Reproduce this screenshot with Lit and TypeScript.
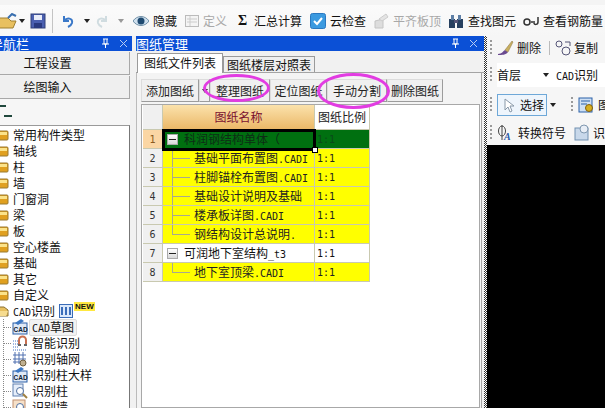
import { LitElement, html, css, svg } from "lit";
import { customElement } from "lit/decorators.js";

const ic = (w: number, h: number, body: unknown, cls = "") =>
  html`<svg class="ic ${cls}" width=${w} height=${h} viewBox="0 0 ${w} ${h}">${body}</svg>`;

/* Latin runs use a 10px mono so they advance 6px, like the half-width bitmap face of the reference. */
const t = (s: string) =>
  s.split(/([\x00-\x7f]+)/).map((p, i) => (i % 2 ? html`<span class="m">${p}</span>` : p));

const folderClosed = ic(9, 11, svg`<rect x="-6" y="1" width="14" height="9" rx="1" fill="#e0a020" stroke="#9a7a30"/><rect x="-5" y="2" width="12" height="3" fill="#fbe38a"/>`);
const folderOpen = ic(9, 11, svg`<path d="M-4 1H4L8 4V10H-4Z" fill="#e8c060" stroke="#8a7030"/><path d="M-4 5H8L6 10H-4Z" fill="#f6dc90"/>`);
const cadIcon = ic(16, 16, svg`<rect x="1" y="4" width="14" height="11" fill="#dfe9f6" stroke="#2a5fa8"/><path d="M3 4L9 0L12 2L6 6Z" fill="#3c78c4"/><text x="1.5" y="13" font-size="6.5" font-weight="700" fill="#123" font-family="Liberation Sans">CAD</text>`);
const magnet = ic(16, 16, svg`<path d="M1 6H6M1 9H6M1 12H6M1 15H14" stroke="#4070c0" stroke-dasharray="1 1"/><path d="M7 10V5a3.5 3.5 0 0 1 7 0v5" fill="none" stroke="#c87050" stroke-width="2"/><path d="M6 10h3M12 10h3" stroke="#666" stroke-width="2"/>`);
const axis = ic(16, 16, svg`<path d="M3 1V13M7 1V13M11 1V13M1 4H14M1 8H14M1 11H14" stroke="#5070b0"/><circle cx="11" cy="12" r="3" fill="#c0b090" stroke="#706040"/>`);
const colSearch = ic(16, 16, svg`<rect x="1" y="1" width="10" height="12" fill="#e6eefa" stroke="#6080b0"/><circle cx="8" cy="8" r="3.5" fill="#fff" stroke="#5070a0"/><path d="M11 11L15 15" stroke="#a08040" stroke-width="2"/>`);
const wallSearch = ic(16, 16, svg`<rect x="1" y="1" width="12" height="13" fill="#f6e0c8" stroke="#c09070"/><circle cx="8" cy="8" r="3.5" fill="#fff" stroke="#5070a0"/>`);
const pin = ic(9, 11, svg`<path d="M2 1H7M3 1V6H6V1M1 6H8M4.500 6V10" stroke="#fff" fill="none"/>`, "pin");
const closeX = ic(9, 9, svg`<path d="M1 1L8 8M8 1L1 8" stroke="#b8ccf4"/>`, "x");

const tree = ["常用构件类型", "轴线", "柱", "墙", "门窗洞", "梁", "板", "空心楼盖", "基础", "其它", "自定义"];
const kids = [
  { t: "CAD草图", i: cadIcon, sel: true },
  { t: "智能识别", i: magnet },
  { t: "识别轴网", i: axis },
  { t: "识别柱大样", i: cadIcon },
  { t: "识别柱", i: colSearch },
  { t: "识别墙", i: wallSearch },
];

type Row = { n: number; name: string; kind: "sel" | "child" | "parent"; last?: boolean };
const rows: Row[] = [
  { n: 1, name: "科润钢结构单体（", kind: "sel" },
  { n: 2, name: "基础平面布置图.CADI", kind: "child" },
  { n: 3, name: "柱脚锚栓布置图.CADI", kind: "child" },
  { n: 4, name: "基础设计说明及基础", kind: "child" },
  { n: 5, name: "楼承板详图.CADI", kind: "child" },
  { n: 6, name: "钢结构设计总说明.", kind: "child", last: true },
  { n: 7, name: "可润地下室结构_t3", kind: "parent" },
  { n: 8, name: "地下室顶梁.CADI", kind: "child", last: true },
];

@customElement("app-root")
export class AppRoot extends LitElement {
  static styles = css`
    :host { display: block; width: 605px; height: 408px; overflow: hidden; background: #f1f1f1; color: #111;
      font: 12px/1 "Noto Sans CJK SC", "Liberation Sans", sans-serif; }
    .m { font: 10px/1 "DejaVu Sans Mono", monospace; }
    .ic { display: block; flex: none; }
    .toolbar { height: 36px; display: flex; align-items: center; padding-top: 5px; box-sizing: border-box;
      background: linear-gradient(#f4f4f4 5px, #fbfbfb 5px, #f6f6f6); white-space: nowrap; overflow: hidden; }
    .tool { display: flex; align-items: center; gap: 4px; flex: none; }
    .tool.off { color: #a8a8a8; }
    .tight { gap: 2px; }
    .sig { font: 700 14px "Liberation Serif", serif; width: 9px; margin-right: 3px; }
    .arrow { width: 0; height: 0; border: 3px solid transparent; border-top: 4px solid #222; border-bottom: 0; flex: none; }
    .arrow.off { border-top-color: #999; }
    .tsep { width: 1px; height: 24px; background: #c4c4c4; flex: none; }
    .ml2 { margin-left: 2px; } .ml3 { margin-left: 3px; } .ml4 { margin-left: 4px; } .ml5 { margin-left: 5px; }
    .ml6 { margin-left: 6px; } .ml7 { margin-left: 7px; } .ml8 { margin-left: 8px; } .ml9 { margin-left: 9px; }
    .ml10 { margin-left: 10px; } .ml11 { margin-left: 11px; } .ml15 { margin-left: 15px; } .ml22 { margin-left: 22px; }
    .main { display: flex; height: 372px; }
    .title { height: 15px; background: #0b50d6; color: #fff; display: flex; align-items: center; font-size: 13px; overflow: hidden; flex: none; }
    .title .name { flex: 1; white-space: nowrap; }
    .title .pin { margin-right: 9px; }
    .title .x { margin-right: 4px; }
    .mid .title .x { margin-right: 6px; }
    .left { width: 132px; flex: none; display: flex; flex-direction: column; }
    .left .title .name { margin-left: -10px; }
    .navbtn { height: 22px; margin: 1px 2px 0 0; border-bottom: 1px solid #a8a8a8; border-right: 1px solid #a8a8a8; background: #efefef;
      display: flex; align-items: center; justify-content: center; padding-right: 34px; flex: none; }
    .navtop { height: 26px; flex: none; margin-right: 2px; background: #f6f6f6; position: relative; }
    .navtop i { position: absolute; background: #20483c; height: 2px; }
    .navtop .a { left: 0; top: 6px; width: 6px; }
    .navtop .b { left: 4px; top: 16px; width: 8px; }
    .treebox { flex: 1; margin-right: 2px; background: #fff; border-top: 1px solid #9a9a9a; border-right: 1px solid #777; padding-top: 1px; overflow: hidden; }
    .trow { height: 16px; display: flex; align-items: center; gap: 4px; white-space: nowrap; }
    .kid { padding-left: 12px; gap: 4px;
      background: repeating-linear-gradient(#888 0 1px, transparent 1px 2px) 3px 0 / 1px 100% no-repeat; }
    .kid::before { content: ""; width: 7px; border-top: 1px dotted #888; margin-left: -8px; margin-right: -3px; }
    .kid .lbl.sel { background: #f2f2f2; border: 1px solid #dcdcdc; border-radius: 2px; padding: 1px 2px; margin-left: -3px; }
    .new { color: #111; background: #ffe840; font: 700 8px "Liberation Sans", sans-serif; padding: 0 1px; align-self: flex-start; margin-left: -3px; margin-top: -1px; }
    .mid { width: 348px; flex: none; margin-left: 4px; display: flex; flex-direction: column; }
    .tabs { height: 21px; display: flex; align-items: flex-end; flex: none; padding-left: 1px; border-bottom: 1px solid #a4a4a4; }
    .tab { height: 15px; padding: 0 3px; display: flex; align-items: center; border: 1px solid #9a9a9a; border-bottom: 0; background: #efefef; white-space: nowrap; }
    .tab.on { height: 20px; background: #fff; padding: 0 6px 2px; box-sizing: border-box; margin-bottom: -1px; }
    .pane { flex: 1; margin-right: 2px; border-right: 1px solid #a4a4a4; border-left: 1px solid #bbb; background: #f4f4f4; padding: 6px 0 0 4px; display: flex; flex-direction: column; position: relative; min-height: 0; }
    .btns { display: flex; height: 23px; flex: none; }
    .btn { display: flex; align-items: center; border: 1px solid #9c9c9c; border-left-color: #dcdcdc; border-top-color: #dcdcdc; background: #f0f0f0; white-space: nowrap; color: #222; justify-content: center; box-sizing: border-box; }
    .w58 { width: 58px; } .w11 { width: 11px; } .w60 { width: 60px; } .w57 { width: 57px; } .w56 { width: 56px; }
    .grid { flex: 1; margin: 2px 1px 0 0; background: #fff; border: 1px solid #a8a8a8; padding: 0 0 0 1px; overflow: hidden; position: relative; }
    .table { display: grid; grid-template-columns: 20px 152px 55px; grid-template-rows: 25px; grid-auto-rows: 19px; width: 227px; position: relative; }
    .cell { box-sizing: border-box; border-bottom: 1px solid #c9c9b0; border-right: 1px solid #c9c9b0; display: flex; align-items: center; white-space: nowrap; overflow: hidden; }
    .hd { justify-content: center; }
    .num { justify-content: center; background: #f0f0f0; color: #333; font: 10px "DejaVu Sans Mono", monospace; }
    .num.on { background: #fbd6a4; color: #8a5a20; }
    .hd0 { background: #f0f0f0; }
    .hd1 { background: linear-gradient(#fbe2ac, #ebb868); color: #7a1030; }
    .hd2 { background: #fff; color: #222; }
    .nm { position: relative; }
    .yellow { background: #ff0; color: #222; }
    .white { background: #fff; color: #111; }
    .green { background: #007010; color: #0e2c16; }
    .ratio { padding-left: 2px; font: 10px "DejaVu Sans Mono", monospace; }
    .green.ratio { color: #0a4a1a; }
    .box { width: 11px; height: 11px; margin-left: 4px; margin-right: 6px; flex: none; border: 1px solid #aaa; background: linear-gradient(#fff, #d8d8d8); display: flex; align-items: center; justify-content: center; box-sizing: border-box; }
    .box::after { content: ""; width: 7px; height: 1px; background: #222; }
    .vl { position: absolute; left: 9px; top: 0; width: 1px; background: #a8a890; }
    .vl.h { height: 10px; } .vl.f { height: 19px; }
    .hl { position: absolute; left: 9px; top: 9px; width: 18px; height: 1px; background: #a8a890; }
    .ctext { margin-left: 31px; }
    .selbox { position: absolute; left: 19px; top: 24px; width: 154px; height: 22px; box-sizing: border-box; border: 3px solid #000; pointer-events: none; }
    .selbox::after { content: ""; position: absolute; right: -5px; bottom: -5px; width: 4px; height: 4px; background: #fff; border: 1px solid #000; }
    .ring { position: absolute; border: 3px solid #e23ce2; border-radius: 50%; box-sizing: border-box; pointer-events: none; }
    .r1 { left: 66px; top: 1px; width: 67px; height: 28px; }
    .r2 { left: 180px; top: 0; width: 73px; height: 36px; }
    .split { width: 3px; flex: none; background: repeating-conic-gradient(#333 0 25%, #fff 0 50%) 0 0 / 2px 2px; }
    .right { flex: 1; display: flex; flex-direction: column; min-width: 0; overflow: hidden; background: #f6f6f6; }
    .rrow { display: flex; align-items: center; white-space: nowrap; flex: none; padding-left: 3px; }
    .r-a { height: 24px; } .r-b { height: 30px; } .r-c { height: 30px; } .r-d { height: 25px; }
    .grip { width: 2px; height: 16px; background: repeating-linear-gradient(#9a9a9a 0 2px, transparent 2px 4px); margin-right: 5px; flex: none; }
    .rsep { width: 1px; height: 14px; background: #bbb; margin: 0 5px 0 8px; flex: none; }
    .combo { display: flex; align-items: center; background: #fff; height: 24px; flex: 1; }
    .selbtn { display: flex; align-items: center; gap: 6px; width: 50px; height: 22px; box-sizing: border-box; border: 1px solid #6ea8d8; background: #eef5fc; padding-left: 6px; flex: none; }
    .black { flex: 1; background: #000; }
  `;

  render() {
    return html`
      <div class="toolbar">
        <span class="tool">${ic(17, 16, svg`<path d="M-4 5H8L11 8H16L13 15H-4Z" fill="#e8c060" stroke="#a08030"/><path d="M8 5L12 1L16 3" fill="none" stroke="#3a70b0" stroke-width="2"/>`)}</span>
        <span class="arrow ml2"></span>
        <span class="tool ml5">${ic(16, 16, svg`<rect x="1" y="1" width="14" height="14" fill="#4a5fb0" stroke="#30407a"/><rect x="4" y="2" width="8" height="5" fill="#e8ecf8"/><rect x="4" y="10" width="8" height="5" fill="#2a3a80"/>`)}</span>
        <span class="tsep ml6"></span>
        <span class="tool ml8">${ic(13, 14, svg`<path d="M3 2V7H8" fill="none" stroke="#3a78c8" stroke-width="2"/><path d="M3 7C6 3 12 4 11 9C10.500 11 9 12 7 13" fill="none" stroke="#3a78c8" stroke-width="2"/>`)}</span>
        <span class="arrow ml10"></span>
        <span class="tool ml6">${ic(13, 14, svg`<path d="M10 2V7H5" fill="none" stroke="#d0dce0" stroke-width="2"/><path d="M10 7C7 3 1 4 2 9C2.500 11 4 12 6 13" fill="none" stroke="#d0dce0" stroke-width="2"/>`)}</span>
        <span class="arrow off ml9"></span>
        <span class="tool ml9">${ic(16, 12, svg`<path d="M0 6C4 0 12 0 16 6C12 12 4 12 0 6Z" fill="#cfe0ee" stroke="#7090a8"/><circle cx="8" cy="6" r="3.500" fill="#1f4a70"/>`)}<span>隐藏</span></span>
        <span class="tool off ml8">${ic(14, 12, svg`<rect x=".5" y=".5" width="13" height="11" fill="#f4f4f4" stroke="#bbb"/><path d="M5 1V11M2 4H12M2 7H12" stroke="#ccc"/>`)}<span>定义</span></span>
        <span class="tool ml11"><b class="sig">Σ</b><span>汇总计算</span></span>
        <span class="tool ml8">${ic(16, 16, svg`<rect x=".5" y=".5" width="15" height="15" rx="2" fill="#3b9ae0" stroke="#2a78c0"/><path d="M4 8L7 11L12 5" fill="none" stroke="#fff" stroke-width="2"/>`)}<span>云检查</span></span>
        <span class="tool off ml7">${ic(16, 16, svg`<path d="M2 15V8L10 6V15Z" fill="#ddd" stroke="#c4c4c4"/><path d="M6 6L13 1L15 4L9 8Z" fill="#e4e4e4" stroke="#ccc"/>`)}<span>平齐板顶</span></span>
        <span class="tool ml7">${ic(16, 14, svg`<rect x="1" y="5" width="6" height="9" fill="#27405f"/><rect x="9" y="5" width="6" height="9" fill="#27405f"/><rect x="3" y="1" width="3" height="5" fill="#5e7fa5"/><rect x="10" y="1" width="3" height="5" fill="#5e7fa5"/><rect x="6" y="6" width="4" height="3" fill="#557"/>`)}<span>查找图元</span></span>
        <span class="tool tight ml7">${ic(18, 10, svg`<circle cx="4" cy="6" r="3" fill="none" stroke="#333" stroke-width="1.500"/><path d="M8 6H12M15 1V6C15 9 11 9 11 7" fill="none" stroke="#333" stroke-width="1.500"/>`)}<span>查看钢筋量</span></span>
      </div>
      <div class="main">
        <section class="left">
          <div class="title"><span class="name">导航栏</span>${pin}${closeX}</div>
          <div class="navbtn">工程设置</div>
          <div class="navbtn">绘图输入</div>
          <div class="navtop"><i class="a"></i><i class="b"></i></div>
          <div class="treebox">
            ${tree.map((x) => html`<div class="trow">${folderClosed}<span>${x}</span></div>`)}
            <div class="trow">${folderOpen}<span>${t("CAD识别")}</span>
              ${ic(14, 14, svg`<rect x=".5" y=".5" width="13" height="13" fill="#dbe8fa" stroke="#3a6cb8"/><path d="M3 3V11M7 3V11M11 3V11" stroke="#3a6cb8" stroke-width="2"/>`)}
              <span class="new">NEW</span></div>
            ${kids.map((k) => html`<div class="trow kid">${k.i}<span class="lbl ${k.sel ? "sel" : ""}">${t(k.t)}</span></div>`)}
          </div>
        </section>
        <section class="mid">
          <div class="title"><span class="name">图纸管理</span>${pin}${closeX}</div>
          <div class="tabs"><div class="tab on">图纸文件列表</div><div class="tab">图纸楼层对照表</div></div>
          <div class="pane">
            <div class="btns">
              <div class="btn w58">添加图纸</div><div class="btn w11"><span class="arrow"></span></div>
              <div class="btn w60">整理图纸</div><div class="btn w57">定位图纸</div>
              <div class="btn w60">手动分割</div><div class="btn w56">删除图纸</div>
            </div>
            <div class="grid">
              <div class="table">
                <div class="cell hd hd0"></div><div class="cell hd hd1">图纸名称</div><div class="cell hd hd2">图纸比例</div>
                ${rows.map((r) => {
                  const bg = r.kind === "sel" ? "green" : r.kind === "parent" ? "white" : "yellow";
                  return html`<div class="cell num ${r.kind === "sel" ? "on" : ""}">${r.n}</div>
                    <div class="cell nm ${bg}">
                      ${r.kind === "child"
                        ? html`<span class="vl ${r.last ? "h" : "f"}"></span><span class="hl"></span><span class="ctext">${t(r.name)}</span>`
                        : html`<span class="box"></span><span>${t(r.name)}</span>`}
                    </div>
                    <div class="cell ratio ${bg}">1:1</div>`;
                })}
                <div class="selbox"></div>
              </div>
            </div>
            <span class="ring r1"></span><span class="ring r2"></span>
          </div>
        </section>
        <div class="split"></div>
        <section class="right">
          <div class="rrow r-a"><span class="grip"></span>
            ${ic(17, 16, svg`<path d="M1 14C5 14 6 11 8 10L11 12C9 15 5 15 1 15Z" fill="#6a4a90"/><path d="M8 10L15 1L16 2L11 12Z" fill="#c8b060" stroke="#8a7040" stroke-width=".5"/>`)}
            <span class="ml3">删除</span><span class="rsep"></span>
            ${ic(19, 16, svg`<circle cx="4" cy="4" r="3" fill="none" stroke="#557"/><circle cx="11" cy="11" r="4" fill="none" stroke="#557"/><path d="M10 2L15 2L15 6" fill="none" stroke="#557"/>`)}
            <span>复制</span></div>
          <div class="rrow r-b"><span class="grip"></span>
            <span class="combo">首层<span class="arrow ml22"></span><span class="ml7">${t("CAD识别")}</span></span></div>
          <div class="rrow r-c"><span class="grip"></span><span class="selbtn">${ic(10, 15, svg`<path d="M1 1V12L4 9L6 14L8 13L6 8H10Z" fill="#fff" stroke="#8898a8"/>`)}<span>选择</span></span>
            <span class="arrow ml3"></span><span class="grip ml15"></span>
            ${ic(16, 16, svg`<rect x="1" y="1" width="13" height="14" fill="#cfe0f4" stroke="#2a60a8"/><path d="M3 4H12M3 7H9" stroke="#2a60a8"/><circle cx="11" cy="11" r="3.500" fill="#d8b020" stroke="#806010"/>`)}
            <span class="ml4">图</span></div>
          <div class="rrow r-d"><span class="grip"></span>
            ${ic(16, 16, svg`<ellipse cx="5" cy="6" rx="3.500" ry="5" fill="none" stroke="#444"/><path d="M5 0V15" stroke="#444"/><text x="7" y="15" font-size="10" font-weight="700" font-style="italic" fill="#2a5aa8" font-family="Liberation Serif">A</text>`)}
            <span class="ml5">转换符号</span>
            ${ic(18, 17, svg`<rect x="2" y="4" width="13" height="12" fill="#c8d8ea" stroke="#7090b0"/><circle cx="11" cy="5" r="4" fill="#e8eef6" stroke="#8098b0"/>`, "ml7")}
            <span class="ml2">识</span></div>
          <div class="black"></div>
        </section>
      </div>
    `;
  }
}
